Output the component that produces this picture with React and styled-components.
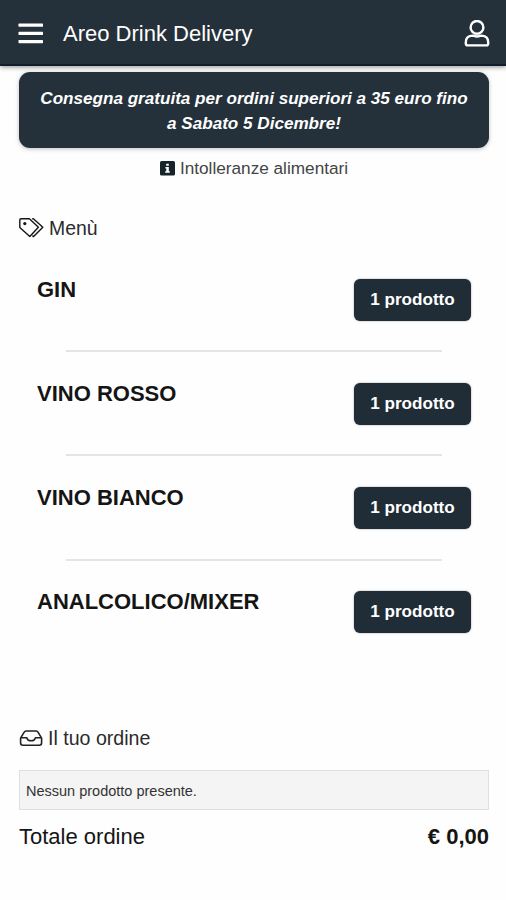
import React from 'react';
import styled, { createGlobalStyle } from 'styled-components';

const categories = ['GIN', 'VINO ROSSO', 'VINO BIANCO', 'ANALCOLICO/MIXER'];

const MenuIcon = () => (
	<svg width="26" height="22" viewBox="0 0 26 22" fill="#fff">
		<rect x="0.5" y="0.6" width="24.5" height="3.2" rx="0.6" />
		<rect x="0.5" y="8.8" width="24.5" height="3.2" rx="0.6" />
		<rect x="0.5" y="17" width="24.5" height="3.2" rx="0.6" />
	</svg>
);

const UserIcon = () => (
	<svg width="26" height="28" viewBox="0 0 26 28" fill="none" stroke="#fff" strokeWidth="2.4">
		<circle cx="13" cy="7.4" r="6.4" />
		<path d="M8.2 15.6C4.2 15.9 1.8 18.5 1.8 22.2V23.5C1.8 24.6 2.6 25.4 3.7 25.4H22.3C23.4 25.4 24.2 24.6 24.2 23.5V22.2C24.2 18.5 21.8 15.9 17.8 15.6C16.4 15.6 15.6 16.5 13 16.5C10.4 16.5 9.6 15.6 8.2 15.6Z" />
	</svg>
);

const InfoIcon = () => (
	<svg width="15" height="15" viewBox="0 0 15 15">
		<rect width="15" height="14.6" rx="1.6" fill="#17232b" />
		<path d="M6.2 2.8H8.8V4.7H6.2ZM5.4 6H8.8V10.3H9.8V11.8H5.2V10.3H6.3V7.4H5.4Z" fill="#fff" />
	</svg>
);

const TagsIcon = () => (
	<svg width="25" height="21" viewBox="0 0 25 21" fill="none" stroke="#151515" strokeWidth="1.4" strokeLinejoin="round">
		<path d="M0.8 2C0.8 1.2 1.2 0.8 2 0.8H10.4L19.4 9.3L10.8 18.6L0.8 9.6Z" />
		<path d="M13.2 0.8H14.4L23.8 9.3L14.6 18.6L13.4 17.6" />
		<circle cx="5.8" cy="5.6" r="1.6" fill="#151515" stroke="none" />
	</svg>
);

const TrayIcon = () => (
	<svg width="24" height="17" viewBox="0 0 24 17" fill="none" stroke="#222" strokeWidth="1.6" strokeLinejoin="round">
		<path d="M1.6 8.2L5.2 2.2C5.7 1.3 6.2 1 7.1 1H17.1C18 1 18.5 1.3 19 2.2L22.6 8.2V12.8C22.6 14.4 21.8 15.2 20.3 15.2H3.9C2.4 15.2 1.6 14.4 1.6 12.8Z" />
		<path d="M1.6 7.8H7.8C8.2 9.6 9.6 10.8 12.1 10.8S16 9.6 16.4 7.8H22.6" />
	</svg>
);

const App = () => {
	return (
		<>
			<GlobalStyle />
			<Header>
				<MenuIcon />
				<HeaderTitle>Areo Drink Delivery</HeaderTitle>
				<UserIcon />
			</Header>
			<Content>
				<Banner>Consegna gratuita per ordini superiori a 35 euro fino a Sabato 5 Dicembre!</Banner>
				<Allergens>
					<InfoIcon />
					Intolleranze alimentari
				</Allergens>
				<SectionTitle>
					<TagsIcon />
					Menù
				</SectionTitle>
				<MenuList>
					{categories.map((name) => (
						<MenuRow key={name}>
							<CategoryName>{name}</CategoryName>
							<CountBtn>1 prodotto</CountBtn>
						</MenuRow>
					))}
				</MenuList>
				<SectionTitle $size="19.6px">
					<TrayIcon />
					Il tuo ordine
				</SectionTitle>
				<EmptyOrder>Nessun prodotto presente.</EmptyOrder>
				<Total>
					Totale ordine
					<Price>€ 0,00</Price>
				</Total>
			</Content>
		</>
	);
};

const GlobalStyle = createGlobalStyle`
	* {
		box-sizing: border-box;
	}
	body {
		margin: 0;
		min-height: 100vh;
		background: #fefefe;
		color: #151515;
		font-family: 'Liberation Sans', Arial, sans-serif;
	}
	svg {
		flex-shrink: 0;
	}
`;

const Header = styled.header`
	display: flex;
	align-items: center;
	height: 66px;
	padding: 4px 16px 0 18px;
	background-color: #25313a;
	border-bottom: 2px solid #101f2b;
	box-shadow: 0 1px 5px rgba(0, 0, 0, 0.45);
`;

const HeaderTitle = styled.h1`
	flex: 1;
	margin: 0 0 0 19px;
	font-size: 22px;
	font-weight: 400;
	color: #fff;
`;

const Content = styled.main`
	padding: 6px 17px 0 19px;
`;

const Banner = styled.div`
	height: 76px;
	padding: 14px 18px 0;
	border-radius: 11px;
	background-color: #25313a;
	box-shadow: 0 1px 4px rgba(0, 0, 0, 0.25);
	color: #fff;
	font-size: 17.1px;
	font-style: italic;
	font-weight: 700;
	line-height: 25px;
	text-align: center;
`;

const Allergens = styled.div`
	display: flex;
	justify-content: center;
	align-items: center;
	gap: 5px;
	height: 22px;
	margin-top: 9px;
	font-size: 17.2px;
	color: #444;
`;

const SectionTitle = styled.h2`
	display: flex;
	align-items: center;
	gap: 5px;
	height: 26px;
	margin: 36px 0 0;
	font-size: ${({ $size }) => $size || '19.4px'};
	font-weight: 400;
	color: #2b2b2b;
`;

const MenuList = styled.ul`
	margin: 38px 18px 92px;
	padding: 0;
	list-style: none;
`;

const MenuRow = styled.li`
	display: grid;
	grid-template-columns: 1fr auto;
	align-items: start;

	&:not(:last-child)::after {
		content: '';
		grid-column: 1 / -1;
		height: 2px;
		margin: 29.4px 29px 30.7px;
		background-color: #e3e4e4;
	}
`;

const CategoryName = styled.h3`
	margin: 0;
	font-size: 22px;
	line-height: 22px;
`;

const CountBtn = styled.button`
	width: 117px;
	height: 42px;
	border: none;
	border-radius: 6px;
	background-color: #202d36;
	box-shadow: 0 0 2px rgba(0, 0, 0, 0.4);
	color: #fff;
	font-family: inherit;
	font-size: 17.1px;
	font-weight: 700;
`;

const EmptyOrder = styled.div`
	height: 40px;
	margin-top: 19px;
	padding-left: 6px;
	border: 1px solid #dfdfdf;
	background-color: #f4f4f4;
	font-size: 14.5px;
	line-height: 40px;
	color: #333;
`;

const Total = styled.div`
	display: flex;
	justify-content: space-between;
	margin-top: 14px;
	font-size: 22px;
	line-height: 25px;
`;

const Price = styled.strong`
	font-weight: 700;
`;

export default App;
